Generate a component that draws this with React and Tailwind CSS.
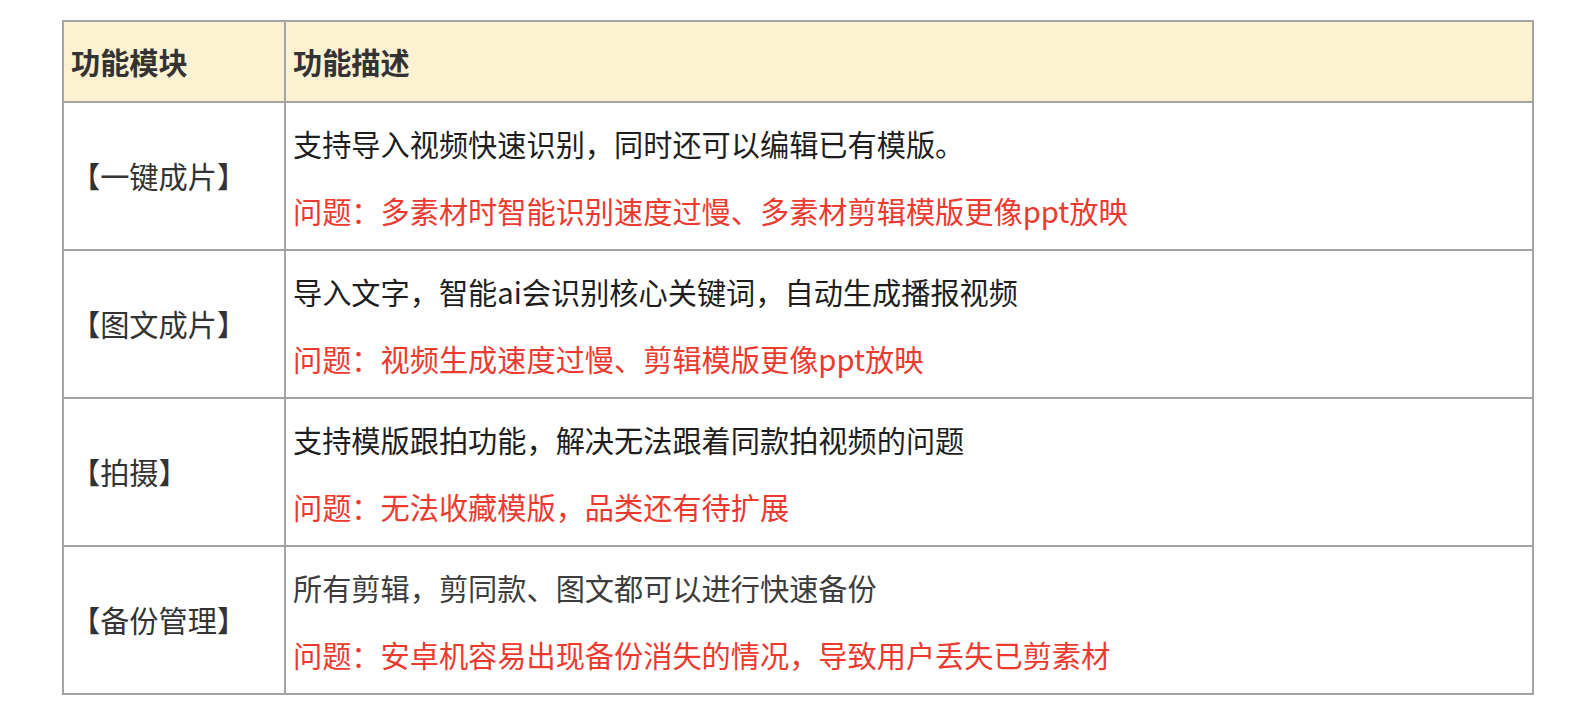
import React from 'react'

const rows = [
  {
    name: '【一键成片】',
    desc: '支持导入视频快速识别，同时还可以编辑已有模版。',
    issue: '问题：多素材时智能识别速度过慢、多素材剪辑模版更像ppt放映',
  },
  {
    name: '【图文成片】',
    desc: '导入文字，智能ai会识别核心关键词，自动生成播报视频',
    issue: '问题：视频生成速度过慢、剪辑模版更像ppt放映',
  },
  {
    name: '【拍摄】',
    desc: '支持模版跟拍功能，解决无法跟着同款拍视频的问题',
    issue: '问题：无法收藏模版，品类还有待扩展',
  },
  {
    name: '【备份管理】',
    desc: '所有剪辑，剪同款、图文都可以进行快速备份',
    issue: '问题：安卓机容易出现备份消失的情况，导致用户丢失已剪素材',
    muted: true,
  },
]

export default function App() {
  return (
    <div
      className="min-h-screen bg-white pt-[20px] pl-[62px] text-[29.2px]"
      style={{ fontFamily: '"Noto Sans CJK SC", "Noto Sans", sans-serif' }}
    >
      <div className="w-[1472px] border-2 border-[#a3a3a3]">
        <div className="flex h-[79px] bg-[#fcf1d1] font-bold text-[#333]">
          <div className="w-[222px] border-r-2 border-[#a3a3a3] px-[7px] flex items-center">功能模块</div>
          <div className="flex-1 px-[7px] flex items-center">功能描述</div>
        </div>
        {rows.map((row) => (
          <div key={row.name} className="flex h-[148px] border-t-2 border-[#a3a3a3]">
            <div className="w-[222px] border-r-2 border-[#a3a3a3] px-[7px] flex items-center text-[#333]">
              {row.name}
            </div>
            <div className="flex-1 px-[7px] flex flex-col justify-center gap-[23px] leading-[44px]">
              <div className={row.muted ? 'text-[#3d3d3d]' : 'text-[#1e1e1e]'}>{row.desc}</div>
              <div className="text-[#ec3a2f]">{row.issue}</div>
            </div>
          </div>
        ))}
      </div>
    </div>
  )
}
